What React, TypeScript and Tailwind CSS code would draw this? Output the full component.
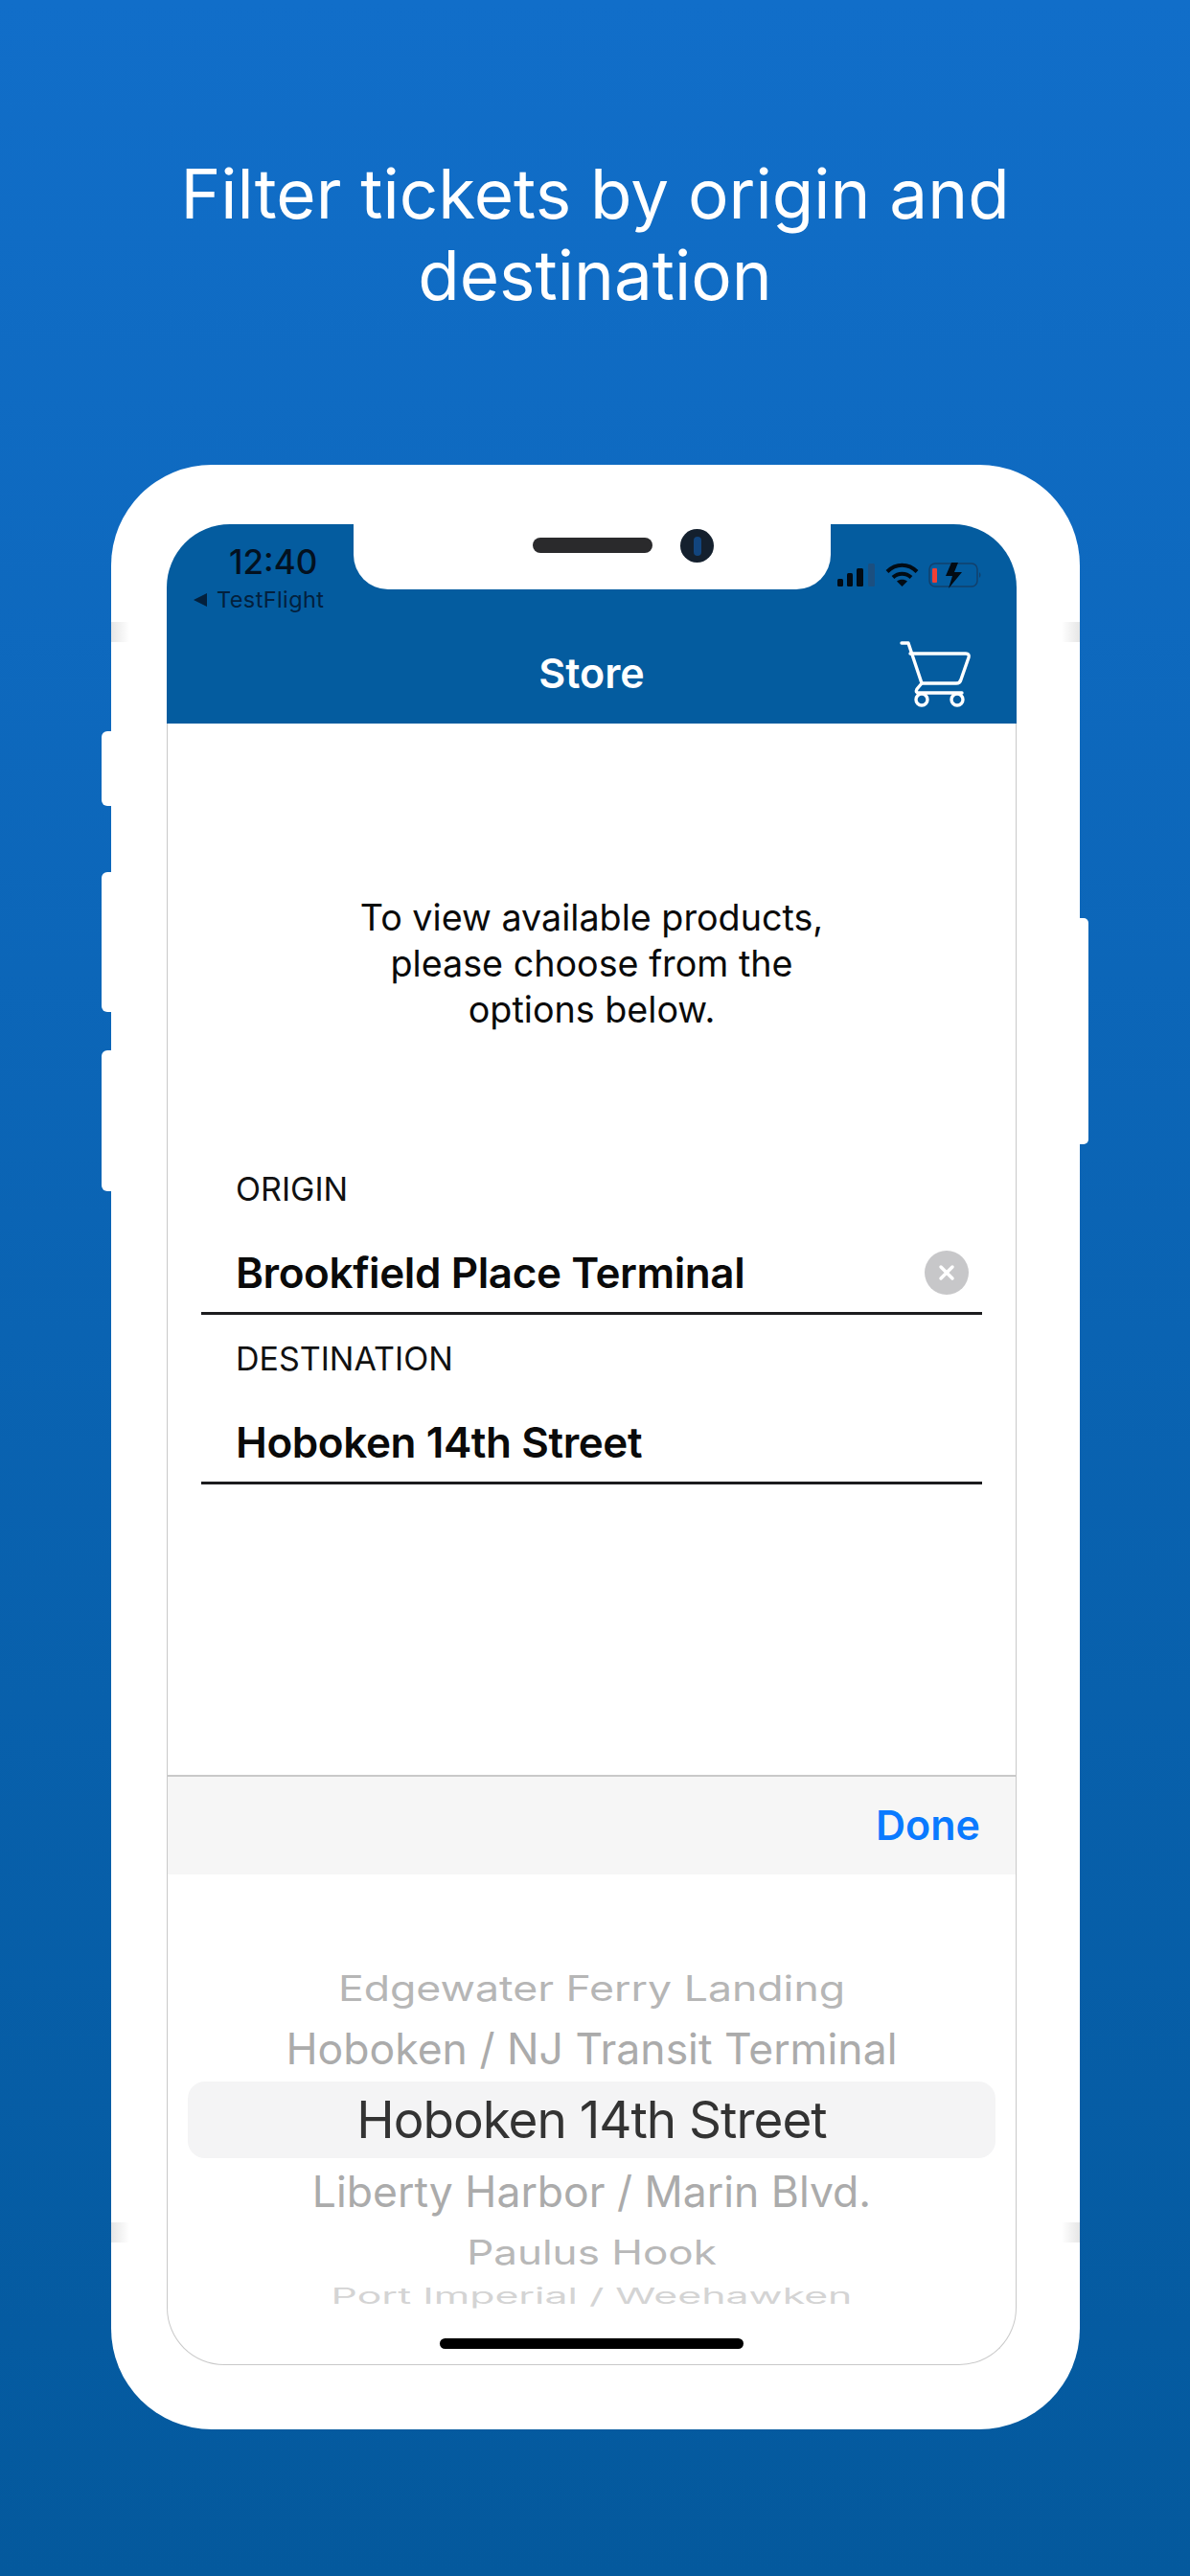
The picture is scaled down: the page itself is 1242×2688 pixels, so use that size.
const font = "font-['Inter','Liberation_Sans',sans-serif]";

// Wheel picker rows, top to bottom. Rows further from the selection get flatter.
const wheelRows = [
  { label: "Edgewater Ferry Landing", row: "h-[60px]", text: "text-[44.6px] text-[#b6b6b6] scale-y-[0.82]" },
  { label: "Hoboken / NJ Transit Terminal", row: "h-[67px]", text: "text-[44.5px] text-[#ababab]" },
  { label: "Hoboken 14th Street", row: "h-[80px] bg-[#f4f4f5] rounded-[18px] mx-[21px] pt-[2px]", text: "text-[53px] tracking-[-1px] text-[#333333]" },
  { label: "Liberty Harbor / Marin Blvd.", row: "h-[70px]", text: "text-[44.5px] text-[#ababab]" },
  { label: "Paulus Hook", row: "h-[56px]", text: "text-[44px] text-[#b8b8b8] scale-y-[0.8]" },
  { label: "Port Imperial / Weehawken", row: "h-[36px]", text: "text-[42.800px] text-[#d4d4d4] scale-y-[0.53]" },
];

function CartIcon() {
  return (
    <svg width="76" height="70" viewBox="0 0 76 70" fill="none" stroke="white" strokeWidth="3.4" strokeLinecap="round" strokeLinejoin="round">
      <path d="M3 3h7l14 42" />
      <path d="M12 14h58q4 0 3 4l-8 23q-1 4-5 4h-36" />
      <path d="M24 45l-5 6q-2 4 2 4h45" />
      <circle cx="24" cy="62" r="6" />
      <circle cx="61" cy="62" r="6" />
    </svg>
  );
}

function StatusIcons() {
  return (
    <div className="flex items-start gap-[10px] pr-[36px]">
      <svg className="mt-[1px]" width="40" height="25" viewBox="0 0 40 25" fill="#020b14">
        <rect x="0" y="16" width="6" height="8" rx="1.500" />
        <rect x="10" y="10" width="6" height="14" rx="1.500" />
        <rect x="20" y="5" width="7" height="19" rx="1.500" />
        <rect x="32" y="0" width="7" height="24" rx="1.500" fill="#1b4f80" />
      </svg>
      <svg width="35" height="26" viewBox="0 0 35 26" fill="none" stroke="#020b14" strokeWidth="4">
        <path d="M2 9.500c9-9 22-9 31 0" />
        <path d="M8 15.500c5.500-5 13.500-5 19 0" />
        <path d="M17.500 25l-5.500-5.500c3-2.500 8-2.500 11 0z" fill="#020b14" stroke="none" />
      </svg>
      <svg width="56" height="27" viewBox="0 0 56 27" fill="none">
        <rect x="1" y="1" width="50" height="24" rx="6" stroke="#12406c" strokeWidth="1.500" />
        <rect x="4" y="6" width="5" height="15" rx="1" fill="#ef4035" />
        <path d="M24 0h7l-4 10h8L21 27l4-13h-7z" fill="#020b14" />
        <path d="M53 10q3 3 0 6z" fill="#12406c" />
      </svg>
    </div>
  );
}

function Field({ label, value, clearable }: { label: string; value: string; clearable?: boolean }) {
  return (
    <div className="mx-[35px] border-b-[3px] border-[#1c1c1e] px-[36px] pb-[14px]">
      <div className="text-[34px] leading-[40px] text-[#111111]">{label}</div>
      <div className="mt-[40px] flex h-[54px] items-center justify-between">
        <span className="text-[44px] leading-[54px] font-semibold tracking-[-0.4px] text-[#0a0a0a]">{value}</span>
        {clearable && (
          <span className="mr-[-22px] flex h-[46px] w-[46px] items-center justify-center rounded-full bg-[#c7c7c9]">
            <svg width="20" height="20" viewBox="0 0 20 20" stroke="white" strokeWidth="3.500" strokeLinecap="round">
              <path d="M4 4l12 12M16 4L4 16" />
            </svg>
          </span>
        )}
      </div>
    </div>
  );
}

export default function App() {
  return (
    <div className={`${font} relative h-[2688px] w-[1242px] overflow-hidden bg-linear-to-b from-[#116ec9] to-[#04599d]`}>
      <h1 className="pt-[160px] text-center text-[71px] leading-[85px] font-normal text-white">
        Filter tickets by origin and
        <br />
        destination
      </h1>

      <div className="relative mt-[155px] ml-[116px] h-[2050px] w-[1011px] rounded-[105px] bg-white pt-[62px] pr-[66px] pl-[58px]">
        {/* hardware buttons */}
        <div className="absolute top-[278px] left-[-10px] h-[78px] w-[12px] rounded-l-[6px] bg-white" />
        <div className="absolute top-[425px] left-[-10px] h-[146px] w-[12px] rounded-l-[6px] bg-white" />
        <div className="absolute top-[611px] left-[-10px] h-[147px] w-[12px] rounded-l-[6px] bg-white" />
        <div className="absolute top-[473px] right-[-9px] h-[236px] w-[11px] rounded-r-[5px] bg-white" />
        {/* antenna bands */}
        <div className="absolute top-[164px] left-0 h-[21px] w-[19px] bg-linear-to-r from-[#e6e6e6] to-white" />
        <div className="absolute top-[164px] right-0 h-[21px] w-[19px] bg-linear-to-l from-[#e6e6e6] to-white" />
        <div className="absolute top-[1834px] left-0 h-[21px] w-[19px] bg-linear-to-r from-[#e6e6e6] to-white" />
        <div className="absolute top-[1834px] right-0 h-[21px] w-[19px] bg-linear-to-l from-[#e6e6e6] to-white" />

        <div className="relative flex h-[1921px] w-[887px] flex-col">
          {/* notch */}
          <div className="absolute top-0 left-[195px] flex h-[68px] w-[498px] items-start rounded-b-[36px] bg-white pt-[14px] pl-[187px]">
            <div className="h-[16px] w-[125px] rounded-full bg-[#2a2a2c]" />
            <div className="mt-[-9px] ml-[29px] flex h-[35px] w-[35px] items-center justify-center rounded-full bg-[#14202e]">
              <div className="h-[20px] w-[8px] rounded-full bg-[#12457e]" />
            </div>
          </div>

          <header className="h-[208px] shrink-0 rounded-t-[66px] bg-[#045c9f]">
            <div className="flex h-[96px] justify-between">
              <div className="pt-[19px] pl-[28px]">
                <div className="pl-[37px] text-[35px] leading-[40px] font-medium text-[#03111f]">12:40</div>
                <div className="mt-[6px] flex items-center gap-[10px] text-[23.500px] leading-[28px] font-normal tracking-[0.4px] text-[#03203c]">
                  <span className="h-0 w-0 border-y-[7px] border-r-[14px] border-y-transparent border-r-[#03203c]" />
                  TestFlight
                </div>
              </div>
              <div className="pt-[40px]">
                <StatusIcons />
              </div>
            </div>
            <div className="relative flex h-[112px] items-center justify-center pt-[6px]">
              <span className="text-[43px] font-semibold text-white">Store</span>
              <div className="absolute top-[25px] right-[47px]">
                <CartIcon />
              </div>
            </div>
          </header>

          <main className="flex-1 border-x border-[#c9c9c9] pt-[178px]">
            <p className="text-center text-[37.700px] leading-[48px] text-[#0a0a0a]">
              To view available products,
              <br />
              please choose from the
              <br />
              options below.
            </p>
            <div className="mt-[144px]">
              <Field label="ORIGIN" value="Brookfield Place Terminal" clearable />
            </div>
            <div className="mt-[26px]">
              <Field label="DESTINATION" value="Hoboken 14th Street" />
            </div>
          </main>

          <div className="flex h-[104px] shrink-0 items-center justify-end border-x border-t-2 border-[#c9c9c9] bg-[#f6f6f6] pr-[37px] pb-[2px]">
            <span className="text-[43px] font-semibold text-[#0a7aff]">Done</span>
          </div>

          <div className="h-[512px] shrink-0 rounded-b-[60px] border-x border-b border-[#c9c9c9] pt-[89px]">
            {wheelRows.map((r) => (
              <div key={r.label} className={`flex items-center justify-center ${r.row}`}>
                <span className={`whitespace-nowrap ${r.text}`}>{r.label}</span>
              </div>
            ))}
            <div className="mx-auto mt-[26px] h-[11px] w-[317px] rounded-full bg-black" />
          </div>
        </div>
      </div>
    </div>
  );
}
